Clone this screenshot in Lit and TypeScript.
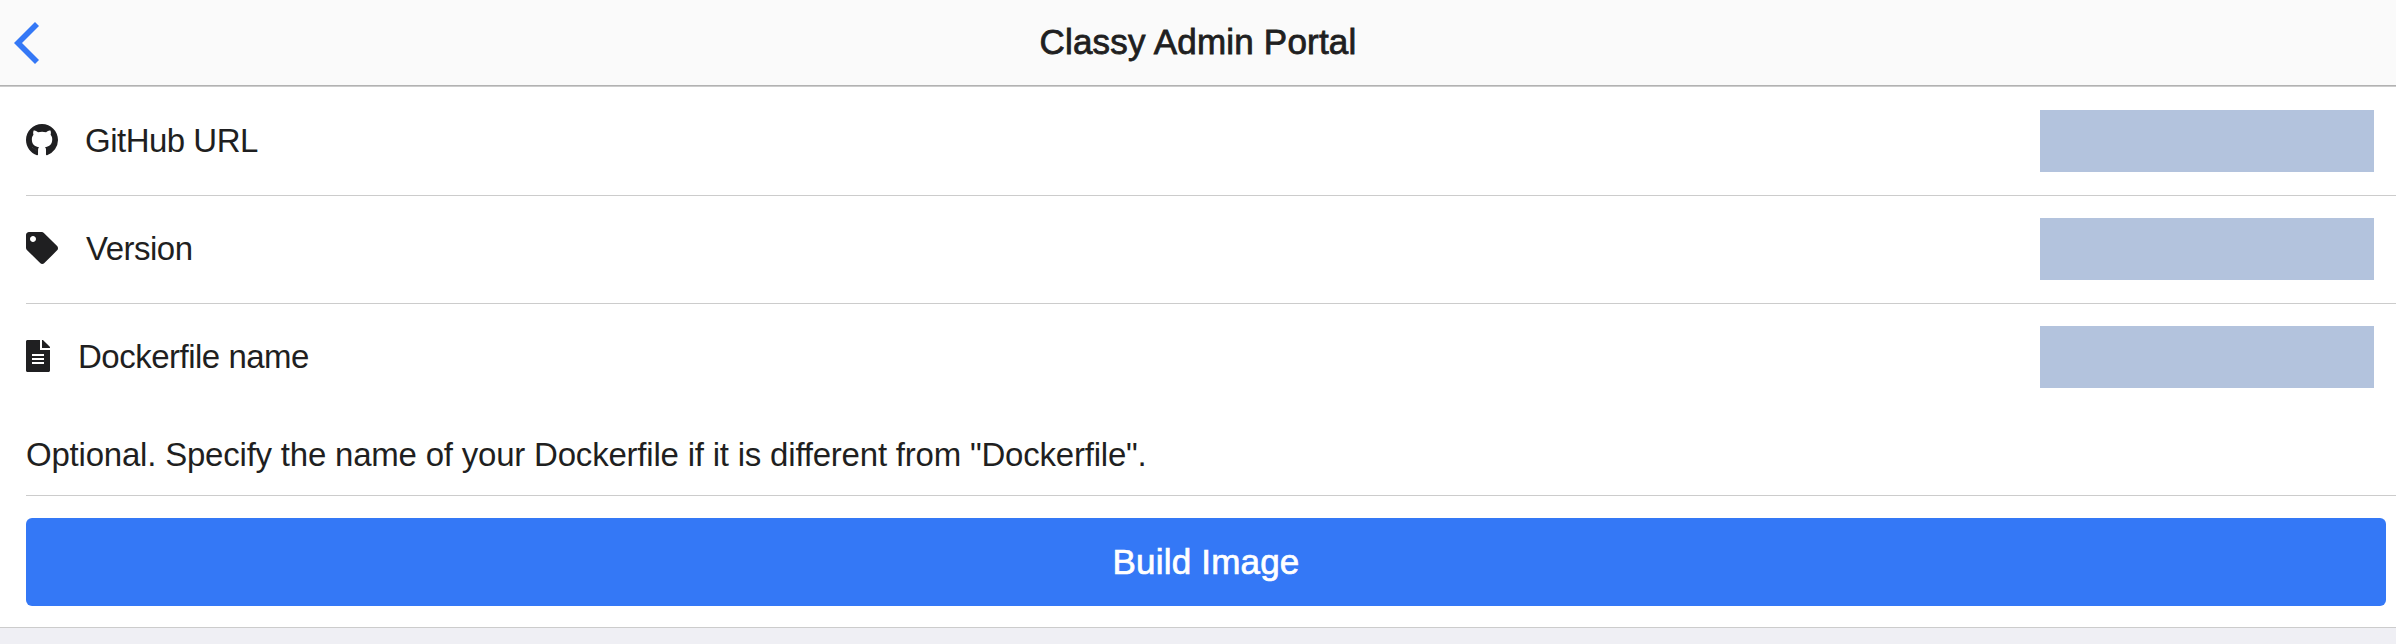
import { LitElement, html, css } from "lit";
import { customElement, state } from "lit/decorators.js";

const githubIcon = html`<svg class="icon github" viewBox="0 0 16 16">
  <path
    d="M8 0C3.58 0 0 3.58 0 8c0 3.54 2.29 6.53 5.47 7.59.4.07.55-.17.55-.38 0-.19-.01-.82-.01-1.49L6.05 12.6c.07-.52.28-.87.51-1.07-1.78-.2-3.64-.89-3.64-3.95 0-.87.31-1.59.82-2.15-.08-.2-.36-1.02.08-2.12 0 0 .67-.21 2.2.82.64-.18 1.32-.27 2-.27s1.36.09 2 .27c1.53-1.04 2.2-.82 2.2-.82.44 1.1.16 1.92.08 2.12.51.56.82 1.27.82 2.15 0 3.07-1.87 3.75-3.65 3.95.29.25.54.73.54 1.48 0 1.07-.01 1.93-.01 2.2 0 .21.15.46.55.38A8.013 8.013 0 0 0 16 8c0-4.420-3.580-8-8-8z"
  />
  <path class="tail" d="M3 11.700c1.200.100.900 1.400 2.600 1.400" />
</svg>`;

const tagIcon = html`<svg class="icon tag" viewBox="0 0 512 512">
  <path
    d="M0 252.118V48C0 21.49 21.49 0 48 0h204.118a48 48 0 0 1 33.941 14.059l211.882 211.882c18.745 18.745 18.745 49.137 0 67.882L293.823 497.941c-18.745 18.745-49.137 18.745-67.882 0L14.059 286.059A48 48 0 0 1 0 252.118zM112 64c-26.51 0-48 21.49-48 48s21.49 48 48 48 48-21.49 48-48-21.49-48-48-48z"
  />
</svg>`;

const fileIcon = html`<svg class="icon file" viewBox="0 0 384 512">
  <path
    fill-rule="evenodd"
    d="M224 160V0H24C10.7 0 0 10.7 0 24v464c0 13.3 10.7 24 24 24h336c13.3 0 24-10.7 24-24V160zM96 224h192v32H96zM96 288h192v32H96zM96 352h192v32H96z"
  />
  <path d="M384 121.900v6.100H256V0h6.100c6.400 0 12.500 2.500 17 7l97.900 98c4.500 4.500 7 10.600 7 16.900z" />
</svg>`;

@customElement("app-root")
export class AppRoot extends LitElement {
  @state() private fields = [
    { icon: githubIcon, label: "GitHub URL" },
    { icon: tagIcon, label: "Version" },
    { icon: fileIcon, label: "Dockerfile name" },
  ];

  static styles = css`
    :host {
      display: flex;
      flex-direction: column;
      height: 644px;
      overflow: hidden;
      background: #efeff4;
      color: #1f1f21;
      font-family: "Liberation Sans", Arial, sans-serif;
      font-size: 33px;
    }
    .toolbar {
      box-sizing: border-box;
      height: 86px;
      flex: none;
      display: grid;
      grid-template-columns: 1fr auto 1fr;
      align-items: center;
      background: #fafafa;
      border-bottom: 1px solid #b2b2b2;
    }
    .back {
      display: block;
      width: 25px;
      height: 42px;
      margin: 1px 0 0 14px;
      fill: #3478f6;
    }
    .title {
      padding-bottom: 1px;
      font-size: 35px;
      line-height: 40px;
      letter-spacing: 0.2px;
      -webkit-text-stroke: 0.8px currentColor;
    }
    .list {
      background: #fff;
      border-top: 1px solid #ccc;
      border-bottom: 1px solid #ccc;
      padding-left: 26px;
    }
    .row {
      box-sizing: border-box;
      display: flex;
      align-items: flex-start;
      height: 108px;
      padding: 22px 22px 0 0;
    }
    .row:first-child {
      height: 109px;
      padding-top: 23px;
    }
    .row.lined {
      border-bottom: 1px solid #ccc;
    }
    .icon {
      display: block;
      height: 32px;
      margin: 14px 28px 0 0;
      fill: #1f1f21;
    }
    .github {
      width: 32px;
      margin-right: 27px;
    }
    .tail {
      fill: none;
      stroke: #4a4a4c;
      stroke-width: 0.35;
      stroke-dasharray: 0.5 0.4;
    }
    .tag {
      width: 32px;
    }
    .file {
      width: 24px;
    }
    .label {
      flex: 1;
      line-height: 62px;
      letter-spacing: -0.5px;
    }
    .field {
      width: 334px;
      height: 62px;
      background: #b3c3dd;
    }
    .hint {
      box-sizing: border-box;
      height: 84px;
      padding-top: 23px;
      line-height: 40px;
      letter-spacing: -0.21px;
      border-bottom: 1px solid #ccc;
    }
    .action {
      padding: 22px 10px 21px 0;
    }
    .build {
      display: block;
      width: 100%;
      height: 88px;
      padding: 0;
      border: 0;
      border-radius: 6px;
      background: #3478f6;
      color: #fff;
      font: 35px/40px "Liberation Sans", Arial, sans-serif;
      letter-spacing: 0.2px;
      -webkit-text-stroke: 0.7px currentColor;
    }
  `;

  render() {
    return html`
      <header class="toolbar">
        <svg class="back" viewBox="0 0 25 42">
          <path d="M0 21 21 0l4 4L8 21l17 17-4 4z" />
        </svg>
        <span class="title">Classy Admin Portal</span>
      </header>
      <main class="list">
        ${this.fields.map(
          (f, i) => html`<div class="row ${i < this.fields.length - 1 ? "lined" : ""}">
            ${f.icon}
            <span class="label">${f.label}</span>
            <div class="field"></div>
          </div>`
        )}
        <div class="hint">
          Optional. Specify the name of your Dockerfile if it is different from "Dockerfile".
        </div>
        <div class="action"><button class="build">Build Image</button></div>
      </main>
    `;
  }
}
